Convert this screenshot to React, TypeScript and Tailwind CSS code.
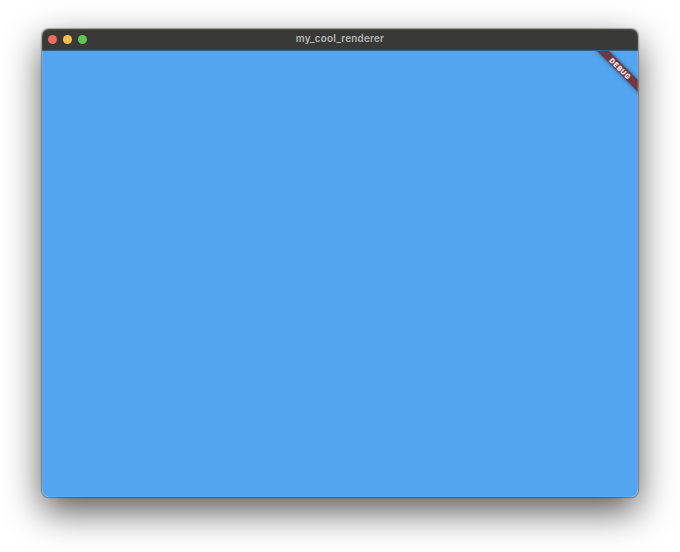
import React from 'react';

function TrafficLights() {
  return (
    <div className="flex w-20 items-center gap-[6px] pl-[6px]">
      <span className="size-[9px] rounded-full bg-[#ec6a5e]" />
      <span className="size-[9px] rounded-full bg-[#f4bf4f]" />
      <span className="size-[9px] rounded-full bg-[#61c554]" />
    </div>
  );
}

function DebugBanner() {
  return (
    <div className="absolute right-[-22.2px] top-[13px] flex h-[8px] w-[80px] rotate-45 items-center justify-center bg-[#723644] shadow-[0_0_4px_rgba(0,0,0,0.55)]">
      <span className="[font-family:Inter,'Liberation_Sans',sans-serif] pl-[1.4px] text-[7px] font-black leading-none tracking-[0.5px] text-[#f5eaec]">
        DEBUG
      </span>
    </div>
  );
}

export default function App() {
  return (
    <div className="h-[552px] w-[680px] overflow-hidden bg-white px-[42px] pt-[29px] [font-family:Inter,'Liberation_Sans',sans-serif]">
      <div className="relative flex h-[468px] w-[596px] flex-col overflow-hidden rounded-[7px] shadow-[0_0_1px_0.5px_rgba(0,0,0,0.3),0_14px_36px_rgba(0,0,0,0.67)]">
        <header className="flex h-[21px] shrink-0 items-center justify-between bg-[#393938]">
          <TrafficLights />
          <h1 className="pb-px text-[9.8px] font-semibold leading-none tracking-[0.26px] text-[#b8b8b7]">my_cool_renderer</h1>
          <div className="w-20" />
        </header>
        <main className="relative flex-1 overflow-hidden border-t border-[#356187] bg-[#52a5ee]">
          <DebugBanner />
        </main>
        <div className="pointer-events-none absolute inset-0 rounded-[7px] border border-white/10" />
      </div>
    </div>
  );
}
